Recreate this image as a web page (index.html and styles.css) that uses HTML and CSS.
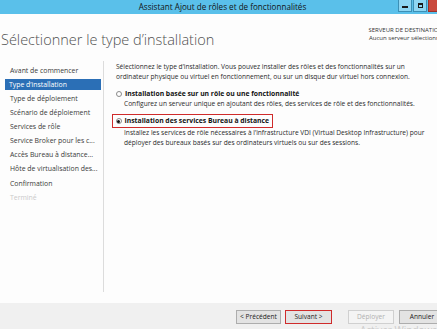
FILE: index.html
```html
<!DOCTYPE html>
<html lang="fr">
<head>
<meta charset="utf-8">
<title>Assistant Ajout de rôles et de fonctionnalités</title>
<link rel="stylesheet" href="styles.css">
</head>
<body>
<div class="window">
  <div class="titlebar">
    <div class="title">Assistant Ajout de rôles et de fonctionnalités</div>
    <div class="controls">
      <span class="ctl min"><span class="glyph-min"></span></span>
      <span class="ctl max"><span class="glyph-max"></span></span>
      <span class="ctl close"></span>
    </div>
  </div>
  <div class="header">
    <h1 class="heading">Sélectionner le type d’installation</h1>
    <div class="dest">
      <div class="dest-title">SERVEUR DE DESTINATION</div>
      <div class="dest-value">Aucun serveur sélectionné</div>
    </div>
  </div>
  <div class="body">
    <nav class="nav">
      <div class="nav-item">Avant de commencer</div>
      <div class="nav-item active">Type d’installation</div>
      <div class="nav-item">Type de déploiement</div>
      <div class="nav-item">Scénario de déploiement</div>
      <div class="nav-item">Services de rôle</div>
      <div class="nav-item">Service Broker pour les c...</div>
      <div class="nav-item">Accès Bureau à distance...</div>
      <div class="nav-item">Hôte de virtualisation des...</div>
      <div class="nav-item">Confirmation</div>
      <div class="nav-item disabled">Terminé</div>
    </nav>
    <main class="content">
      <p class="intro">Sélectionnez le type d’installation. Vous pouvez installer des rôles et des fonctionnalités sur un ordinateur physique ou virtuel en fonctionnement, ou sur un disque dur virtuel hors connexion.</p>
      <div class="option">
        <div class="option-label"><span class="radio"></span><span class="label-text">Installation basée sur un rôle ou une fonctionnalité</span></div>
        <div class="option-desc">Configurez un serveur unique en ajoutant des rôles, des services de rôle et des fonctionnalités.</div>
      </div>
      <div class="option option-selected">
        <div class="option-label highlighted"><span class="radio checked"></span><span class="label-text">Installation des services Bureau à distance</span></div>
        <div class="option-desc">Installez les services de rôle nécessaires à l’infrastructure VDI (Virtual Desktop Infrastructure) pour déployer des bureaux basés sur des ordinateurs virtuels ou sur des sessions.</div>
      </div>
    </main>
  </div>
  <div class="footer">
    <span class="btn btn-prev">&lt; Précédent</span>
    <span class="btn btn-next">Suivant &gt;</span>
    <span class="btn btn-disabled">Déployer</span>
    <span class="btn">Annuler</span>
  </div>
  <div class="watermark">Activer Windows</div>
</div>
</body>
</html>
```
FILE: styles.css
```css
html, body {
  margin: 0;
  padding: 0;
  background: #ffffff;
  overflow: hidden;
}
body {
  width: 437px;
  height: 329px;
  font-family: "Open Sans", "Noto Sans", sans-serif;
  color: #222;
}
.window {
  position: relative;
  width: 445px;
  height: 329px;
  background: #fdfdfd;
  display: flex;
  flex-direction: column;
  overflow: hidden;
}
.titlebar {
  position: relative;
  height: 14px;
  flex: none;
  background: #5ac0ea;
  display: flex;
  align-items: center;
  justify-content: center;
}
.title {
  font-size: 8.1px;
  line-height: 14px;
  color: #141414;
}
.controls {
  position: absolute;
  top: 0;
  right: 0;
  display: flex;
  gap: 1px;
}
.ctl {
  display: flex;
  align-items: center;
  justify-content: center;
  width: 14px;
  height: 12px;
  box-sizing: border-box;
  border: 1px solid #3c8fb5;
  border-top: none;
  background: #8ed6f3;
}
.ctl.close {
  width: 17px;
  background: #c9493d;
  border-color: #9e3128;
}
.glyph-min {
  width: 6px;
  height: 2px;
  background: #1a1a1a;
  margin-top: 3px;
}
.glyph-max {
  width: 5px;
  height: 5px;
  box-sizing: border-box;
  border: 1px solid #1a1a1a;
  border-top-width: 2px;
}
.header {
  height: 46px;
  flex: none;
  display: flex;
  justify-content: space-between;
  align-items: flex-start;
}
.heading {
  margin: 18px 0 0 1px;
  font-size: 14.5px;
  line-height: 16px;
  font-weight: 300;
  color: #505050;
}
.dest {
  margin: 13px 2px 0 0;
  text-align: right;
  font-size: 6px;
  line-height: 7.5px;
  color: #333;
  white-space: nowrap;
}
.body {
  height: 243px;
  flex: none;
  display: flex;
}
.nav {
  width: 104px;
  flex: none;
  margin: 1px 0 11px 0;
  padding-top: 3.5px;
  box-sizing: border-box;
  border-right: 1px solid #dcdcdc;
  display: flex;
  flex-direction: column;
  gap: 3.15px;
}
.nav-item {
  height: 11px;
  line-height: 11px;
  margin-left: 5px;
  margin-right: 2px;
  padding-left: 5px;
  font-size: 6.9px;
  color: #3a3a3a;
  white-space: nowrap;
  overflow: hidden;
}
.nav-item.active {
  background: #2b6fb6;
  color: #ffffff;
  padding-left: 4px;
}
.nav-item.disabled {
  color: #cacaca;
}
.content {
  flex: 1;
  padding: 2px 0 0 12px;
  font-size: 6.6px;
  line-height: 10px;
  color: #2a2a2a;
}
.intro {
  margin: 0 0 7px 0;
  width: 310px;
}
.option-label {
  display: flex;
  align-items: center;
  height: 10px;
}
.radio {
  width: 6px;
  height: 6px;
  box-sizing: border-box;
  border: 1px solid #8a8a8a;
  border-radius: 50%;
  background: #fff;
  margin-right: 3px;
  flex: none;
  display: flex;
  align-items: center;
  justify-content: center;
}
.radio.checked::after {
  content: "";
  width: 3px;
  height: 3px;
  border-radius: 50%;
  background: #111;
}
.label-text {
  font-weight: 700;
  font-size: 6.8px;
  color: #111;
}
.option-desc {
  padding-left: 8px;
  width: 310px;
}
.option {
  margin-bottom: 5px;
}
.option-label.highlighted {
  width: fit-content;
  height: 14px;
  box-sizing: border-box;
  margin-left: -4px;
  padding: 0 3px 0 2.5px;
  border: 1.5px solid #cf2b2b;
}
.footer {
  flex: 1;
  background: #f0f0f0;
  display: flex;
  justify-content: flex-end;
  align-items: flex-start;
  padding-top: 7px;
  box-sizing: border-box;
  gap: 4px;
}
.btn {
  width: 46px;
  height: 14px;
  box-sizing: border-box;
  border: 1px solid #adadad;
  background: #e3e3e3;
  font-size: 6.6px;
  line-height: 12px;
  text-align: center;
  color: #1a1a1a;
}
.btn-prev {
  width: 45px;
}
.btn-next {
  width: 47px;
  border: 1.5px solid #cf2b2b;
  line-height: 11px;
  margin-right: 12px;
}
.btn-disabled {
  color: #b0b0b0;
  background: #f4f4f4;
  border-color: #d0d0d0;
  margin-right: 1px;
}
.watermark {
  position: absolute;
  left: 360px;
  top: 324px;
  font-size: 10px;
  line-height: 12px;
  color: #cbcbcb;
}
```
